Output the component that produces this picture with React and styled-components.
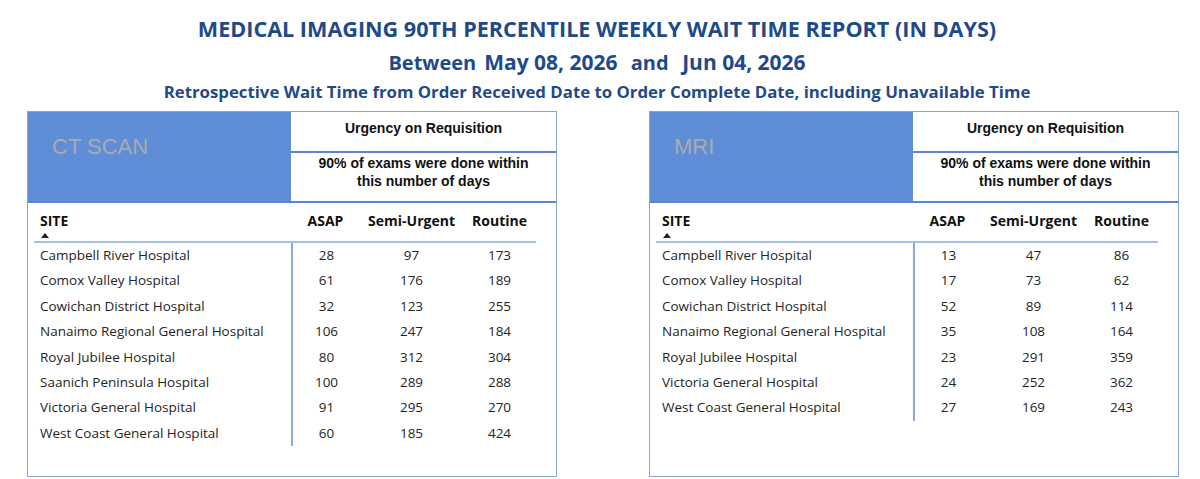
import React from "react";
import styled, { createGlobalStyle } from "styled-components";

const GlobalStyle = createGlobalStyle`
  body {
    margin: 0;
    background: #ffffff;
    font-family: "Open Sans", "Liberation Sans", sans-serif;
  }
`;

const Page = styled.div`
  width: 1200px;
  height: 479px;
  overflow: hidden;
  box-sizing: border-box;
  padding-top: 14px;
`;

const Titles = styled.header`
  display: flex;
  flex-direction: column;
  align-items: center;
  color: #1f4a89;
  font-weight: 700;
  padding-right: 6px;
`;

const MainTitle = styled.h1`
  margin: 0;
  font-size: 21.6px;
  line-height: 30px;
  font-weight: 700;
`;

const DateLine = styled.div`
  display: flex;
  align-items: baseline;
  gap: 8px;
  height: 32px;
  line-height: 32px;
  margin-top: 2px;
`;

const DateWord = styled.span`
  font-size: ${(p) => (p.$big ? "21px" : "20px")};
`;

const SubTitle = styled.h2`
  margin: 2px 0 0;
  font-size: 16.8px;
  line-height: 24px;
  font-weight: 700;
`;

const Panels = styled.main`
  display: flex;
  gap: 92px;
  padding-left: 27px;
  margin-top: 7px;
`;

const Panel = styled.section`
  width: 530px;
  height: 366px;
  box-sizing: border-box;
  border: 1px solid #86a6da;
`;

const PanelHead = styled.div`
  display: grid;
  grid-template-columns: 263px 1fr;
  height: 91px;
  box-sizing: border-box;
  border-bottom: 2px solid #5b86cf;
`;

const Modality = styled.div`
  background: #5f8dd6;
  color: #a9abb0;
  font-family: "Liberation Sans", Arial, sans-serif;
  font-size: 22px;
  line-height: 22px;
  padding: 24px 0 0 24px;
`;

const Urgency = styled.div`
  display: flex;
  flex-direction: column;
  font-family: "Liberation Sans", Arial, sans-serif;
  font-weight: 700;
  font-size: 14px;
  color: #111111;
  text-align: center;
`;

const UrgencyTitle = styled.div`
  height: 41px;
  box-sizing: border-box;
  padding-top: 8px;
  line-height: 16px;
  border-bottom: 2px solid #5b86cf;
`;

const UrgencyNote = styled.div`
  padding-top: 2px;
  line-height: 17.5px;
`;

const Table = styled.div`
  padding-left: 6px;
`;

const COLS = "257px 69px 103px 73px";

const HeadRow = styled.div`
  display: grid;
  grid-template-columns: ${COLS};
  width: 502px;
  height: 38px;
  border-bottom: 2px solid #a3bfea;
  font-weight: 700;
  font-size: 14px;
  color: #111111;
`;

const HeadCell = styled.div`
  display: flex;
  flex-direction: column;
  align-items: ${(p) => (p.$site ? "flex-start" : "center")};
  padding: 8px 0 0 ${(p) => (p.$site ? "6px" : "0")};
  line-height: 20px;
`;

const SortArrow = styled.span`
  width: 0;
  height: 0;
  margin: 2px 0 0 1px;
  border-left: 4.5px solid transparent;
  border-right: 4.5px solid transparent;
  border-bottom: 5px solid #222222;
`;

const Row = styled.div`
  display: grid;
  grid-template-columns: ${COLS};
  width: 502px;
  height: 25.4px;
  line-height: 25.4px;
  font-size: 13.5px;
  color: #252525;
`;

const Cell = styled.div`
  text-align: ${(p) => (p.$site ? "left" : "center")};
  padding-left: ${(p) => (p.$site ? "6px" : "0")};
  border-left: ${(p) => (p.$divider ? "2px solid #8aaade" : "none")};
  white-space: nowrap;
`;

const ctScan = [
  ["Campbell River Hospital", 28, 97, 173],
  ["Comox Valley Hospital", 61, 176, 189],
  ["Cowichan District Hospital", 32, 123, 255],
  ["Nanaimo Regional General Hospital", 106, 247, 184],
  ["Royal Jubilee Hospital", 80, 312, 304],
  ["Saanich Peninsula Hospital", 100, 289, 288],
  ["Victoria General Hospital", 91, 295, 270],
  ["West Coast General Hospital", 60, 185, 424],
];

const mri = [
  ["Campbell River Hospital", 13, 47, 86],
  ["Comox Valley Hospital", 17, 73, 62],
  ["Cowichan District Hospital", 52, 89, 114],
  ["Nanaimo Regional General Hospital", 35, 108, 164],
  ["Royal Jubilee Hospital", 23, 291, 359],
  ["Victoria General Hospital", 24, 252, 362],
  ["West Coast General Hospital", 27, 169, 243],
];

const WaitPanel = ({ title, rows }) => (
  <Panel>
    <PanelHead>
      <Modality>{title}</Modality>
      <Urgency>
        <UrgencyTitle>Urgency on Requisition</UrgencyTitle>
        <UrgencyNote>
          90% of exams were done within
          <br />
          this number of days
        </UrgencyNote>
      </Urgency>
    </PanelHead>
    <Table>
      <HeadRow>
        <HeadCell $site>
          SITE
          <SortArrow />
        </HeadCell>
        <HeadCell>ASAP</HeadCell>
        <HeadCell>Semi-Urgent</HeadCell>
        <HeadCell>Routine</HeadCell>
      </HeadRow>
      {rows.map(([site, asap, semi, routine]) => (
        <Row key={site}>
          <Cell $site>{site}</Cell>
          <Cell $divider>{asap}</Cell>
          <Cell>{semi}</Cell>
          <Cell>{routine}</Cell>
        </Row>
      ))}
    </Table>
  </Panel>
);

export default function App() {
  return (
    <Page>
      <GlobalStyle />
      <Titles>
        <MainTitle>MEDICAL IMAGING 90TH PERCENTILE WEEKLY WAIT TIME REPORT (IN DAYS)</MainTitle>
        <DateLine>
          <DateWord>Between</DateWord>
          <DateWord $big>May 08, 2026</DateWord>
          <DateWord>&nbsp;and</DateWord>
          <DateWord $big>&nbsp;Jun 04, 2026</DateWord>
        </DateLine>
        <SubTitle>
          Retrospective Wait Time from Order Received Date to Order Complete Date, including Unavailable Time
        </SubTitle>
      </Titles>
      <Panels>
        <WaitPanel title="CT SCAN" rows={ctScan} />
        <WaitPanel title="MRI" rows={mri} />
      </Panels>
    </Page>
  );
}
